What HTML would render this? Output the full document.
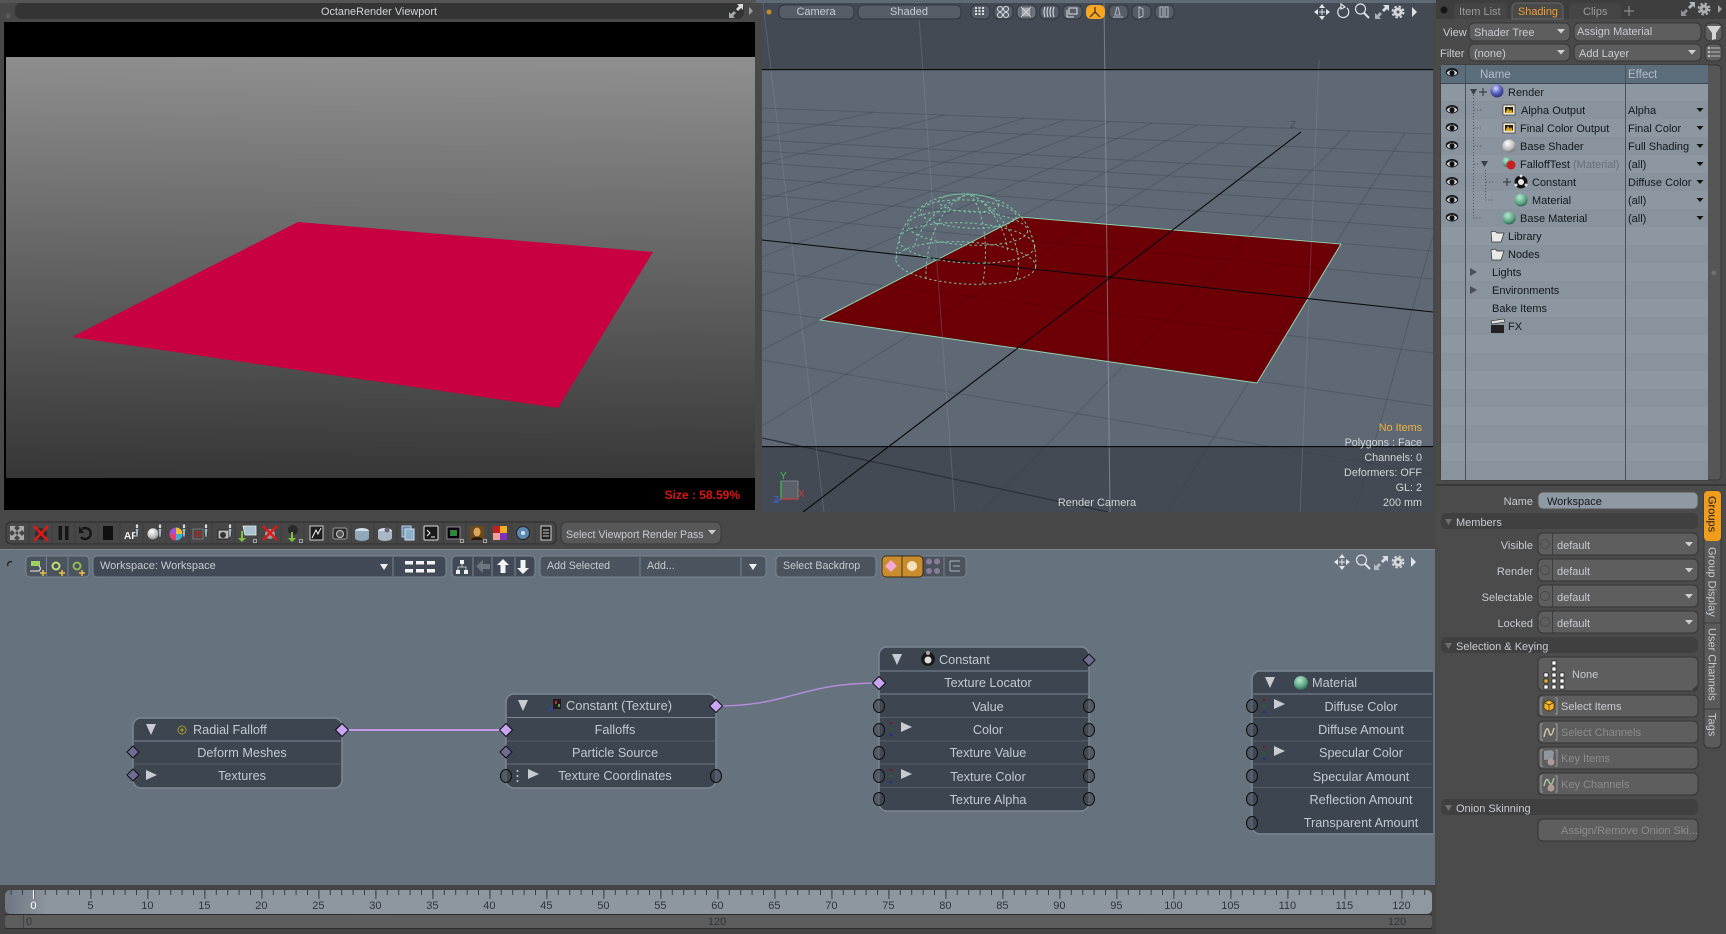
<!DOCTYPE html>
<html><head><meta charset="utf-8"><title>Modo</title>
<style>
html,body{margin:0;padding:0;background:#484848;overflow:hidden;width:1726px;height:934px}
svg{display:block;width:1726px;height:934px}
text{font-family:"Liberation Sans",sans-serif;font-size:11px;fill:#d2d4d6}
.m{text-anchor:middle}.e{text-anchor:end}
.n{font-size:12.7px;fill:#c3c9d0}
.d{fill:#14181c}
.l{fill:#c8ccd0}
.f{fill:#8c8c8c}
.o{font-size:10.9px}
.b{font-size:10.6px;fill:#c8ccd0}
.tl{font-size:11px;fill:#30353a}
</style></head><body>
<svg xmlns="http://www.w3.org/2000/svg" width="1726" height="934" viewBox="0 0 1726 934">
<defs>
<linearGradient id="og" x1="0.02" y1="0" x2="0" y2="1"><stop offset="0" stop-color="#8e8e8e"/><stop offset="1" stop-color="#363636"/></linearGradient>
<linearGradient id="rl" x1="0" y1="0" x2="1" y2="0"><stop offset="0" stop-color="#6e7782"/><stop offset=".03" stop-color="#8d959e"/><stop offset="1" stop-color="#8f979f"/></linearGradient>
<radialGradient id="sb" cx=".4" cy=".3" r=".8"><stop offset="0" stop-color="#d4d8ff"/><stop offset=".5" stop-color="#5860c0"/><stop offset="1" stop-color="#20245c"/></radialGradient>
<radialGradient id="sw" cx=".4" cy=".3" r=".8"><stop offset="0" stop-color="#fff"/><stop offset=".6" stop-color="#bbb"/><stop offset="1" stop-color="#555"/></radialGradient>
<radialGradient id="sg" cx=".4" cy=".3" r=".8"><stop offset="0" stop-color="#b8e8d0"/><stop offset=".6" stop-color="#5ca484"/><stop offset="1" stop-color="#1f4a38"/></radialGradient>
<clipPath id="vp"><rect x="762" y="3" width="671" height="509"/></clipPath>
<clipPath id="pl"><polygon points="1020,217 1341,244 1257,383 820,320"/></clipPath>
<clipPath id="sc"><rect x="0" y="549" width="1433" height="336"/></clipPath>
<pattern id="t1" x="33.4" y="890" width="11.4" height="20" patternUnits="userSpaceOnUse"><rect width="1" height="5" fill="#3a3f45"/></pattern>
<pattern id="t2" x="33.4" y="890" width="57" height="20" patternUnits="userSpaceOnUse"><rect width="1" height="9" fill="#3a3f45"/></pattern>
<g id="grid">
<line x1="762" y1="360" x2="1433" y2="474"/><line x1="762" y1="310" x2="1433" y2="406"/><line x1="762" y1="271" x2="1433" y2="353"/><line x1="762" y1="215" x2="1433" y2="279"/><line x1="762" y1="195" x2="1433" y2="251"/><line x1="762" y1="178" x2="1433" y2="229"/><line x1="762" y1="163" x2="1433" y2="209"/><line x1="762" y1="151" x2="1433" y2="192"/><line x1="762" y1="140" x2="1433" y2="177"/><line x1="762" y1="122" x2="1433" y2="153"/><line x1="762" y1="108" x2="1433" y2="134"/>
<line x1="1433" y1="236" x2="1355" y2="512"/><line x1="1405" y1="133" x2="1167" y2="512"/><line x1="1350" y1="131" x2="982" y2="512"/><line x1="1247" y1="127" x2="762" y2="426"/><line x1="1197" y1="125" x2="762" y2="350"/><line x1="1152" y1="123" x2="762" y2="296"/><line x1="1109" y1="122" x2="762" y2="257"/><line x1="1065" y1="120" x2="762" y2="226"/><line x1="1024" y1="118" x2="762" y2="200"/><line x1="945" y1="115" x2="762" y2="164"/><line x1="874" y1="112" x2="762" y2="138"/>
</g>
<g id="eye"><path d="M-6 0C-3-4.5 3-4.5 6 0C3 4 -3 4 -6 0Z" fill="#d8dce0" stroke="#111" stroke-width="1"/><circle r="2.6" fill="#111"/><path d="M-6-1.5C-3-5.5 3-5.5 6-1.5" fill="none" stroke="#111"/></g>
<path id="da" d="M-3.5-2H3.5L0 2Z" fill="#111"/>
<path id="dw" d="M-4-2H4L0 2.5Z" fill="#cfcfcf"/>
<g id="pc"><ellipse rx="5.5" ry="6.5" fill="#434b56" fill-opacity=".6" stroke="#0c0c0c" stroke-width="1"/></g>
<path id="pa" d="M0-6.5L6.5 0L0 6.5L-6.5 0Z" fill="#c8a4f4" stroke="#111" stroke-width="1"/>
<path id="pi" d="M0-6L6 0L0 6L-6 0Z" fill="#6f6c92" stroke="#111" stroke-width="1"/>
<path id="ar" d="M-5-5L6 0L-5 5Z" fill="#c8ccd0"/>
<g id="exp" fill="#d8dde2"><path d="M1-7H7V-1L5-3L2 0L0-2L3-5Z"/><path d="M-1 7H-7V1L-5 3L-2 0L0 2L-3 5Z" opacity=".7"/></g>
<g id="gear"><circle r="4.5" fill="#d4d8dc"/><circle r="5.5" fill="none" stroke="#d4d8dc" stroke-width="2" stroke-dasharray="2.4 2"/><circle r="1.5" fill="#555"/></g>
<g id="mv" fill="#e2e5e8"><path d="M0-8L3-4H-3ZM0 8L3 4H-3ZM-8 0L-4-3V3ZM8 0L4-3V3Z"/><rect x="-3" y="-.5" width="6" height="1"/><rect x="-.5" y="-3" width="1" height="6"/></g>
<g id="mg" fill="none" stroke="#dfe3e7"><circle cx="-1.5" cy="-2" r="5" stroke-width="1.2"/><line x1="2" y1="2" x2="7" y2="7" stroke-width="2"/></g>
<g id="rgb"><circle cy="-6" r="1.3" fill="#7a1a22"/><circle r="1.3" fill="#1d6a2c"/><circle cy="6" r="1.3" fill="#1d2d90"/></g>
<g id="dp"><rect x="-1.5" y="-7" width="3" height="4.500" rx="1" fill="#d8d8d8" stroke="#222" stroke-width=".5"/><path d="M-1.800-2.500h3.600l-.8 8l-1 1.500l-1-1.500z" fill="#9fb4c4" stroke="#222" stroke-width=".5"/></g>
<rect id="bd" x="-1.500" y="-1.500" width="3" height="3" fill="#444" stroke="#ccc" stroke-width=".7"/>
</defs>

<rect width="1726" height="934" fill="#484848"/>
<rect width="760" height="3" fill="#555"/>

<!-- Octane viewport -->
<circle cx="8" cy="16" r="2.5" fill="#5a5a5a"/>
<rect x="15" y="3" width="729" height="16" rx="6" fill="#343434"/>
<text x="379" y="15" class="m o">OctaneRender Viewport</text>
<use href="#exp" x="736" y="11"/>
<path d="M749 7L753 11L749 15Z" fill="#a0a0a0"/>
<rect x="4" y="22" width="751" height="488" fill="#000"/>
<rect x="6" y="57" width="749" height="421" fill="url(#og)"/>
<polygon points="298,222 653,252 558,408 72,337" fill="#c80041"/>
<text x="740" y="499" class="e" style="font-size:12px;font-weight:bold;fill:#dc1414">Size : 58.59%</text>

<!-- 3D viewport -->
<rect x="756" y="0" width="680" height="3" fill="#5f6a76"/>
<rect x="762" y="3" width="671" height="509" fill="#5e6975"/>
<rect x="762" y="3" width="671" height="66" fill="#434a54"/>
<rect x="762" y="446" width="671" height="66" fill="#434a54"/>
<g clip-path="url(#vp)">
 <use href="#grid" stroke="#39424d" stroke-opacity=".38" stroke-width="1" fill="none"/>
 <line x1="762" y1="438" x2="1108" y2="512" stroke="#2c3036" stroke-width="1.2"/>
 <polygon points="1020,217 1341,244 1257,383 820,320" fill="#6d0007"/>
 <g clip-path="url(#pl)"><use href="#grid" stroke="#5e0208" stroke-width="1" fill="none"/></g>
 <polygon points="1020,217 1341,244 1257,383 820,320" fill="none" stroke="#8fd4b0" stroke-width="1"/>
 <g stroke="#8a96a2" stroke-width="1" opacity=".3">
  <line x1="763" y1="3" x2="824" y2="512"/><line x1="918" y1="3" x2="955" y2="512"/><line x1="1319" y1="60" x2="1300" y2="512"/>
 </g>
 <line x1="1104" y1="3" x2="1110" y2="512" stroke="#98a3ae" stroke-width="1" opacity=".6"/>
 <line x1="762" y1="240" x2="1433" y2="312" stroke="#0a0a0a" stroke-width="1.1"/>
 <line x1="1301" y1="132" x2="803" y2="512" stroke="#0a0a0a" stroke-width="1.1"/>
 <text x="1290" y="128" style="fill:#444c56;font-size:10px">Z</text>
 <g fill="none" stroke="#7fd4aa" stroke-width="1" stroke-dasharray="2.500 2.500" opacity=".9">
  <g transform="rotate(3 967 240)">
  <ellipse cx="967" cy="263" rx="70" ry="21"/><ellipse cx="967" cy="243" rx="68" ry="20"/><ellipse cx="967" cy="228" rx="60" ry="17"/><ellipse cx="967" cy="214" rx="48" ry="14"/><ellipse cx="967" cy="203" rx="30" ry="9"/>
  <path d="M897 263C897 215 930 194 967 194C1004 194 1037 215 1037 263"/>
  <path d="M928 281C925 235 945 200 967 194M985 283C990 240 980 205 967 194M1018 277C1028 240 995 205 967 194M915 248C920 225 945 200 967 194M1008 248C1005 225 985 200 967 194"/>
  </g>
 </g>
</g>
<rect x="762" y="69" width="671" height="1.2" fill="#0c0c0c"/>
<rect x="762" y="446" width="671" height="1.2" fill="#0c0c0c"/>
<!-- viewport toolbar -->
<circle cx="769" cy="12" r="2.5" fill="#c88a2a"/>
<rect x="779" y="5" width="75" height="14" rx="5" fill="#565d67" stroke="#30353c"/>
<text x="816" y="15" class="m l">Camera</text>
<rect x="858" y="5" width="103" height="14" rx="5" fill="#565d67" stroke="#30353c"/>
<text x="909" y="15" class="m l">Shaded</text>
<g fill="#565d67" stroke="#30353c">
<rect x="971" y="5" width="19" height="14" rx="5"/><rect x="994" y="5" width="19" height="14" rx="5"/><rect x="1017" y="5" width="19" height="14" rx="5" fill="#6e747d"/><rect x="1040" y="5" width="19" height="14" rx="5"/><rect x="1063" y="5" width="19" height="14" rx="5"/><rect x="1109" y="5" width="19" height="14" rx="5"/><rect x="1132" y="5" width="19" height="14" rx="5"/><rect x="1155" y="5" width="19" height="14" rx="5"/>
</g>
<rect x="1086" y="5" width="19" height="14" rx="5" fill="#f6a623"/>
<path d="M1095 7V12L1090 17M1095 12L1100 17" fill="none" stroke="#3a2a10" stroke-width="1.2"/>
<g fill="none" stroke="#d8dce0" stroke-width="1.1">
<path d="M975 8h10M975 11h10M975 14h10" stroke-dasharray="2 1.500" stroke-width="2"/>
<circle cx="1000" cy="9" r="2.5"/><circle cx="1006" cy="9" r="2.5"/><circle cx="1000" cy="15" r="2.5"/><circle cx="1006" cy="15" r="2.5"/>
<rect x="1021" y="7" width="10" height="10" fill="#a4a9b0" stroke="#5a5f66"/>
<path d="M1021 7l10 10M1031 7l-10 10" stroke="#d8dce0" stroke-width=".8"/>
<path d="M1045 7q-2 5 0 10M1048 7q-2 5 0 10M1051 7q-2 5 0 10M1054 7q-2 5 0 10"/>
<path d="M1069 8h8v6h-8zM1067 10v7h7"/>
<path d="M1118 7l2 8h-5l2-8M1113 17h10" stroke="#aeb3b9"/>
<path d="M1139 7l4 2v7l-4 2z" stroke="#aeb3b9"/>
<path d="M1160 7h3v10h-3zM1165 7h3v10h-3z" stroke="#aeb3b9"/>
</g>
<use href="#mv" x="1322" y="12"/>
<path d="M1347 8A5.5 5.5 0 1 1 1341 7M1341 4V9L1345 7Z" fill="none" stroke="#dfe3e7" stroke-width="1.2"/>
<use href="#mg" x="1362" y="11"/>
<use href="#exp" x="1382" y="12"/>
<use href="#gear" x="1398" y="12"/>
<path d="M1412 7L1417 12L1412 17Z" fill="#e0e0e0"/>
<!-- overlay text -->
<g style="font-size:10.800px">
<text x="1422" y="431" class="e" style="fill:#f0b040;font-size:10.800px">No Items</text>
<text x="1422" y="446" class="e" style="font-size:10.800px">Polygons : Face</text>
<text x="1422" y="461" class="e" style="font-size:10.800px">Channels: 0</text>
<text x="1422" y="476" class="e" style="font-size:10.800px">Deformers: OFF</text>
<text x="1422" y="491" class="e" style="font-size:10.800px">GL: 2</text>
<text x="1422" y="506" class="e" style="font-size:10.800px">200 mm</text>
</g>
<text x="1097" y="506" class="m">Render Camera</text>
<rect x="781" y="481" width="17" height="18" fill="#5a5f68" stroke="#9aa0a8" stroke-width=".6"/>
<line x1="781" y1="481" x2="781" y2="499" stroke="#3fc04f" stroke-width="1.2"/>
<line x1="781" y1="499" x2="798" y2="499" stroke="#d03a3a" stroke-width="1.2"/>
<line x1="781" y1="499" x2="776" y2="502" stroke="#4060d0" stroke-width="1.2"/>
<text x="780" y="479" style="font-size:10px;fill:#3fc04f">Y</text>
<text x="798" y="497" style="font-size:10px;fill:#d03a3a">X</text>
<text x="773" y="503" style="font-size:10px;fill:#4060d0">Z</text>

<!-- Render toolbar -->
<rect x="6" y="522" width="550" height="22" rx="5" fill="#474747" stroke="#2c2c2c"/>
<g stroke="#3c3c3c"><path d="M29 523v20M52 523v20M75 523v20M98 523v20M120 523v20M143 523v20M166 523v20M189 523v20M212 523v20M235 523v20M258 523v20M281 523v20M304 523v20M328 523v20M351 523v20M374 523v20M397 523v20M420 523v20M443 523v20M466 523v20M489 523v20M512 523v20M535 523v20"/></g>
<g>
<g fill="#a8a8a8"><path d="M10 526l6 0-2 2 3 3-2 2-3-3-2 2zM24 526l-6 0 2 2-3 3 2 2 3-3 2 2zM10 540l6 0-2-2 3-3-2-2-3 3-2-2zM24 540l-6 0 2-2-3-3 2-2 3 3 2-2z"/></g>
<circle cx="41" cy="534" r="6" fill="#2e2e2e"/><path d="M34 526L48 541M48 526L34 541" stroke="#e01818" stroke-width="2.400"/>
<rect x="58.500" y="526" width="3.500" height="14" fill="#151515"/><rect x="65" y="526" width="3.500" height="14" fill="#151515"/>
<path d="M82 529A5.500 5.500 0 1 1 81 537" fill="none" stroke="#151515" stroke-width="2.400"/><path d="M79 526v7h5z" fill="#151515"/>
<rect x="103" y="526" width="10" height="14" fill="#101010"/>
<text x="124" y="539" style="font-size:10px;fill:#f0f0f0;font-weight:bold">AF</text><use href="#dp" x="137" y="531"/>
<circle cx="153" cy="534" r="6" fill="url(#sw)" stroke="#333" stroke-width=".6"/><use href="#dp" x="160" y="531"/>
<circle cx="176" cy="534" r="6.500" fill="#a050d0"/><path d="M176 534L176 527.500A6.500 6.500 0 0 1 182.500 534Z" fill="#e8c030"/><path d="M176 534L182.500 534A6.500 6.500 0 0 1 176 540.500Z" fill="#40b0d0"/><path d="M176 534L169.500 534A6.500 6.500 0 0 0 176 540.500Z" fill="#e04070"/><use href="#dp" x="184" y="531"/>
<rect x="193" y="529" width="10" height="10" fill="none" stroke="#777"/><rect x="196" y="532" width="4" height="4" fill="none" stroke="#d01818"/><use href="#dp" x="206" y="531"/>
<rect x="218" y="530" width="11" height="9" fill="#bbb" stroke="#222"/><circle cx="223" cy="535" r="3" fill="#333"/><use href="#dp" x="230" y="531"/>
<path d="M243 526h13v9h-11z" fill="#a8c0d0" stroke="#eee" stroke-width=".8"/><path d="M241 531v7h-3l4 4 4-4h-3v-7z" fill="#80c040"/><use href="#bd" x="255" y="541"/>
<circle cx="270" cy="534" r="5" fill="#999"/><path d="M263 526L277 540M277 526L263 540" stroke="#e01818" stroke-width="2.400"/>
<circle cx="293" cy="530" r="5" fill="#2a2a2a"/><path d="M291 532v6h-3l4 4 4-4h-3v-6z" fill="#80c040"/><use href="#bd" x="301" y="541"/>
<rect x="310" y="526" width="13" height="14" fill="#1c1c1c" stroke="#ccc"/><path d="M312 538l4-8 2 4 3-6" stroke="#eee" fill="none"/>
<rect x="333" y="528" width="14" height="11" rx="2" fill="#2c2c2c" stroke="#999"/><circle cx="340" cy="534" r="3.500" fill="#555" stroke="#ccc"/>
<ellipse cx="362" cy="531" rx="7" ry="3" fill="#cfe0ea"/><path d="M355 531v7a7 3 0 0 0 14 0v-7" fill="#90a8b8"/>
<ellipse cx="385" cy="531" rx="7" ry="3" fill="#dde"/><path d="M378 531v7a7 3 0 0 0 14 0v-7" fill="#a8b8c4"/><circle cx="387" cy="530" r="2.500" fill="#667"/>
<rect x="402" y="526" width="9" height="11" fill="#6a8aa8" stroke="#bcd"/><rect x="405" y="529" width="9" height="11" fill="#8ab0cc" stroke="#cde"/>
<rect x="424" y="526" width="14" height="14" rx="1" fill="#1a1a1a" stroke="#ddd"/><path d="M427 530l3 3-3 3M431 537h4" stroke="#eee" fill="none"/>
<rect x="447" y="527" width="13" height="12" fill="#101" stroke="#888"/><rect x="450" y="530" width="7" height="6" fill="#2a8a3a"/><use href="#bd" x="462" y="541"/>
<rect x="470" y="526" width="14" height="14" fill="#6a4a1c"/><ellipse cx="477" cy="532" rx="3.500" ry="4.500" fill="#d8a860"/><path d="M471 540c1-4 11-4 12 0z" fill="#2a1a10"/><use href="#bd" x="485" y="541"/>
<rect x="493" y="526" width="14" height="14" fill="#c02020"/><rect x="500" y="533" width="7" height="7" fill="#8030c0"/><rect x="493" y="533" width="7" height="7" fill="#f0a0a0"/><rect x="500" y="526" width="7" height="7" fill="#f0b020"/>
<circle cx="523" cy="533" r="6.500" fill="#5a8ab0" stroke="#222"/><circle cx="523" cy="533" r="2" fill="#dde"/>
<rect x="541" y="526" width="10" height="14" fill="#222" stroke="#ccc"/><path d="M543 530h6M543 533h6M543 536h6" stroke="#ccc"/>
</g>
<rect x="561" y="522" width="160" height="22" rx="6" fill="#585858" stroke="#383838"/>
<text x="566" y="538" class="b">Select Viewport Render Pass</text>
<use href="#dw" x="712" y="532"/>

<!-- Schematic -->
<rect x="0" y="549" width="1435" height="336" fill="#66727e"/>
<rect x="0" y="549" width="1435" height="1" fill="#7b8692"/>
<path d="M8 566A3 3 0 0 1 12 562" fill="none" stroke="#1c1c1c" stroke-width="1.200"/>
<g fill="#4a535e" stroke="#7b8692">
<rect x="26" y="556" width="63" height="21" rx="4"/>
<rect x="93" y="556" width="353" height="21" rx="4" fill="#404955"/>
<rect x="452" y="556" width="83" height="21" rx="4" fill="#404955"/>
<rect x="540" y="556" width="226" height="21" rx="4"/>
<rect x="776" y="556" width="100" height="21" rx="4"/>
<rect x="881" y="556" width="85" height="21" rx="4"/>
</g>
<rect x="882" y="556" width="41" height="21" rx="4" fill="#c98c2f" stroke="#3a2c10"/>
<g stroke="#7b8692"><path d="M46.500 557v19M68 557v19M393 557v19M473 557v19M492 557v19M515 557v19M640 557v19M741 557v19M944 557v19"/></g>
<line x1="902" y1="556" x2="902" y2="577" stroke="#4a3a14"/>
<rect x="31" y="561" width="9" height="5" fill="#9fd060"/><path d="M30 571h9a3 3 0 0 0 0-5" fill="none" stroke="#eee"/><path d="M43 570v6M40 573h6" stroke="#f0c040" stroke-width="1.500"/>
<circle cx="56" cy="566" r="3.500" fill="none" stroke="#bfe070" stroke-width="2"/><path d="M62 570v6M59 573h6" stroke="#f0c040" stroke-width="1.500"/>
<circle cx="77" cy="566" r="3.500" fill="none" stroke="#90b858" stroke-width="2"/><path d="M82 570v6M79 573h6" stroke="#f0c040" stroke-width="1.500"/>
<text x="100" y="569" class="l" style="font-size:11px">Workspace: Workspace</text>
<path d="M380 564h8l-4 6z" fill="#eee"/>
<g fill="#f4f4f4"><rect x="405" y="561" width="8" height="3.500"/><rect x="416" y="561" width="8" height="3.500"/><rect x="427" y="561" width="8" height="3.500"/><rect x="405" y="569" width="8" height="3.500"/><rect x="416" y="569" width="8" height="3.500"/><rect x="427" y="569" width="8" height="3.500"/></g>
<g fill="#f0f0f0"><rect x="460" y="560" width="4" height="4"/><rect x="456" y="570" width="4" height="4"/><rect x="464" y="570" width="4" height="4"/></g>
<path d="M462 564v3M458 570v-3h8v3" fill="none" stroke="#ddd" stroke-width=".8"/>
<path d="M476 566l7-6v4h7v5h-7v4z" fill="#6d757f"/>
<path d="M503 559l6 6h-3.500v8h-5v-8h-3.500z" fill="#f4f4f4"/>
<path d="M523 574l6-6h-3.500v-8h-5v8h-3.500z" fill="#f4f4f4"/>
<text x="547" y="569" class="b">Add Selected</text>
<text x="647" y="569" class="b">Add...</text>
<path d="M749 564h8l-4 6z" fill="#eee"/>
<text x="783" y="569" class="b">Select Backdrop</text>
<path d="M891 560l6 6-6 6-6-6z" fill="#f2a8d0"/>
<circle cx="912" cy="566" r="5" fill="#f4e2c0"/>
<g fill="#8a7c98"><circle cx="929" cy="561.500" r="3"/><circle cx="937" cy="561.500" r="3"/><circle cx="929" cy="571" r="3"/><circle cx="937" cy="571" r="3"/></g>
<path d="M950 561h10M953 566h7M950 571h10M950 561v10" stroke="#9aa0a6" fill="none" stroke-width="1.200"/>
<use href="#mv" x="1342" y="562"/><use href="#mg" x="1363" y="562"/><use href="#exp" x="1381" y="563"/><use href="#gear" x="1398" y="562"/>
<path d="M1411 557L1416 562L1411 567Z" fill="#dfe3e7"/>

<!-- connections -->
<line x1="342" y1="730" x2="506" y2="730" stroke="#c09ae6" stroke-width="2"/>
<path d="M716 706C790 706 800 683 879 683" fill="none" stroke="#b48edc" stroke-width="1.400"/>

<!-- Node: Radial Falloff -->
<g clip-path="url(#sc)">
<rect x="133" y="718" width="209" height="70" rx="8" fill="#3d4551" stroke="#7d8895" stroke-width="1.500"/>
<line x1="134" y1="741" x2="341" y2="741" stroke="#7d8895"/><line x1="134" y1="764" x2="341" y2="764" stroke="#565f6b"/>
<path d="M146 724h10l-5 11z" fill="#c8ccd0"/>
<circle cx="182" cy="730" r="4" fill="none" stroke="#a09a30"/><circle cx="182" cy="730" r="1.500" fill="#a09a30"/>
<text x="193" y="734" class="n">Radial Falloff</text>
<text x="242" y="757" class="n m">Deform Meshes</text>
<use href="#ar" x="151" y="775"/>
<text x="242" y="780" class="n m">Textures</text>
<use href="#pa" x="342" y="730"/><use href="#pi" x="133" y="752"/><use href="#pi" x="133" y="775"/>

<!-- Node: Constant (Texture) -->
<rect x="506" y="694" width="210" height="94" rx="8" fill="#3d4551" stroke="#7d8895" stroke-width="1.500"/>
<line x1="507" y1="717.500" x2="715" y2="717.500" stroke="#7d8895"/><line x1="507" y1="741" x2="715" y2="741" stroke="#565f6b"/><line x1="507" y1="764" x2="715" y2="764" stroke="#6a7480"/>
<path d="M518 700h10l-5 11z" fill="#c8ccd0"/>
<path d="M549 711l4-5" stroke="#2a48b0" stroke-width="2"/><rect x="553" y="699" width="8" height="10" fill="#241c1c"/><rect x="555" y="701" width="2" height="3" fill="#b83030"/><rect x="558" y="704" width="2" height="3" fill="#50a050"/>
<text x="566" y="710" class="n" style="font-size:12.900px">Constant (Texture)</text>
<text x="615" y="734" class="n m">Falloffs</text>
<text x="615" y="757" class="n m">Particle Source</text>
<circle cx="517.500" cy="771" r="1" fill="#ccc"/><circle cx="517.500" cy="776" r="1" fill="#ccc"/><circle cx="517.500" cy="781" r="1" fill="#ccc"/>
<use href="#ar" x="533" y="774"/>
<text x="615" y="780" class="n m">Texture Coordinates</text>
<use href="#pa" x="506" y="730"/><use href="#pi" x="506" y="752"/><use href="#pc" x="506" y="776"/><use href="#pc" x="716" y="776"/><use href="#pa" x="716" y="706"/>

<!-- Node: Constant -->
<rect x="879" y="647" width="210" height="164" rx="8" fill="#3d4551" stroke="#7d8895" stroke-width="1.500"/>
<line x1="880" y1="671" x2="1088" y2="671" stroke="#7d8895"/><line x1="880" y1="694" x2="1088" y2="694" stroke="#7d8895"/><line x1="880" y1="717.500" x2="1088" y2="717.500" stroke="#565f6b"/><line x1="880" y1="741" x2="1088" y2="741" stroke="#565f6b"/><line x1="880" y1="764" x2="1088" y2="764" stroke="#565f6b"/><line x1="880" y1="787.500" x2="1088" y2="787.500" stroke="#565f6b"/>
<path d="M892 654h10l-5 11z" fill="#c8ccd0"/>
<circle cx="928" cy="659" r="7" fill="#181818"/><circle cx="928" cy="660" r="3.500" fill="#ddd"/><circle cx="928" cy="653" r="2" fill="#aaa"/>
<text x="939" y="664" class="n">Constant</text>
<text x="988" y="687" class="n m">Texture Locator</text>
<text x="988" y="711" class="n m">Value</text>
<text x="988" y="734" class="n m">Color</text>
<text x="988" y="757" class="n m">Texture Value</text>
<text x="988" y="781" class="n m">Texture Color</text>
<text x="988" y="804" class="n m">Texture Alpha</text>
<use href="#rgb" x="891" y="729"/><use href="#ar" x="906" y="727"/><use href="#rgb" x="891" y="776"/><use href="#ar" x="906" y="774"/>
<use href="#pi" x="1089" y="660"/><use href="#pa" x="879" y="683"/>
<use href="#pc" x="879" y="706"/><use href="#pc" x="879" y="730"/><use href="#pc" x="879" y="753"/><use href="#pc" x="879" y="776"/><use href="#pc" x="879" y="799"/>
<use href="#pc" x="1089" y="706"/><use href="#pc" x="1089" y="730"/><use href="#pc" x="1089" y="753"/><use href="#pc" x="1089" y="776"/><use href="#pc" x="1089" y="799"/>

<!-- Node: Material -->
<rect x="1252" y="671" width="240" height="163" rx="8" fill="#3d4551" stroke="#7d8895" stroke-width="1.500"/>
<line x1="1253" y1="694" x2="1432" y2="694" stroke="#7d8895"/><line x1="1253" y1="717.500" x2="1432" y2="717.500" stroke="#565f6b"/><line x1="1253" y1="741" x2="1432" y2="741" stroke="#565f6b"/><line x1="1253" y1="764" x2="1432" y2="764" stroke="#565f6b"/><line x1="1253" y1="787.500" x2="1432" y2="787.500" stroke="#565f6b"/>
<path d="M1265 677h10l-5 11z" fill="#c8ccd0"/>
<circle cx="1301" cy="683" r="7" fill="url(#sg)"/>
<text x="1312" y="687" class="n">Material</text>
<text x="1361" y="711" class="n m">Diffuse Color</text>
<text x="1361" y="734" class="n m">Diffuse Amount</text>
<text x="1361" y="757" class="n m">Specular Color</text>
<text x="1361" y="781" class="n m">Specular Amount</text>
<text x="1361" y="804" class="n m">Reflection Amount</text>
<text x="1361" y="827" class="n m">Transparent Amount</text>
<use href="#rgb" x="1264" y="706"/><use href="#ar" x="1279" y="704"/><use href="#rgb" x="1264" y="753"/><use href="#ar" x="1279" y="751"/>
<use href="#pc" x="1252" y="706"/><use href="#pc" x="1252" y="730"/><use href="#pc" x="1252" y="753"/><use href="#pc" x="1252" y="776"/><use href="#pc" x="1252" y="799"/><use href="#pc" x="1252" y="823"/>
</g>

<!-- Timeline -->
<rect x="0" y="885" width="1436" height="49" fill="#444"/>
<rect x="5" y="890" width="1427" height="24" rx="5" fill="url(#rl)"/>
<rect x="5" y="890" width="1427" height="20" fill="url(#t1)"/>
<rect x="5" y="890" width="1427" height="20" fill="url(#t2)"/>
<rect x="33" y="890" width="1" height="9" fill="#fff"/>
<rect x="5" y="915" width="1427" height="13" rx="3" fill="#5d5d5d"/>
<rect x="5" y="914" width="1427" height="1" fill="#2c2c2c"/>
<rect x="5" y="928" width="1427" height="1" fill="#2c2c2c"/>
<rect x="23" y="915" width="1" height="13" fill="#444"/>
<text x="33.400" y="909" class="m tl" style="fill:#fff">0</text>
<g class="tl">
<text x="90.400" y="909" class="m tl">5</text><text x="147.400" y="909" class="m tl">10</text><text x="204.400" y="909" class="m tl">15</text><text x="261.400" y="909" class="m tl">20</text><text x="318.400" y="909" class="m tl">25</text><text x="375.400" y="909" class="m tl">30</text><text x="432.400" y="909" class="m tl">35</text><text x="489.400" y="909" class="m tl">40</text><text x="546.400" y="909" class="m tl">45</text><text x="603.400" y="909" class="m tl">50</text><text x="660.400" y="909" class="m tl">55</text><text x="717.400" y="909" class="m tl">60</text><text x="774.400" y="909" class="m tl">65</text><text x="831.400" y="909" class="m tl">70</text><text x="888.400" y="909" class="m tl">75</text><text x="945.400" y="909" class="m tl">80</text><text x="1002.400" y="909" class="m tl">85</text><text x="1059.400" y="909" class="m tl">90</text><text x="1116.400" y="909" class="m tl">95</text><text x="1173.400" y="909" class="m tl">100</text><text x="1230.400" y="909" class="m tl">105</text><text x="1287.400" y="909" class="m tl">110</text><text x="1344.400" y="909" class="m tl">115</text><text x="1401.400" y="909" class="m tl">120</text>
<text x="26" y="925" class="tl">0</text><text x="717" y="925" class="m tl">120</text><text x="1397" y="925" class="m tl">120</text>
</g>

<!-- Right panel -->
<rect x="1436" y="0" width="290" height="934" fill="#4a4a4a"/>
<rect x="1436" y="0" width="290" height="19" fill="#3e3e3e"/>
<circle cx="1444" cy="10" r="3.500" fill="#161616"/>
<path d="M1454 19V8a5 5 0 0 1 5-5H1502a5 5 0 0 1 5 5V19Z" fill="#454545"/>
<path d="M1569 19V8a5 5 0 0 1 5-5H1616a5 5 0 0 1 5 5V19Z" fill="#454545"/>
<path d="M1512 19V8a5 5 0 0 1 5-5H1558a5 5 0 0 1 5 5V19Z" fill="#4a4a4a" stroke="#656565"/>
<text x="1459" y="15" style="font-size:11px;fill:#9a9a9a">Item List</text>
<text x="1518" y="15" style="font-size:10.900px;fill:#f0a030">Shading</text>
<text x="1583" y="15" style="font-size:11px;fill:#9a9a9a">Clips</text>
<path d="M1629 6v10M1624 11h10" stroke="#9a9a9a" stroke-width="1"/>
<use href="#exp" x="1688" y="9" opacity=".75"/><use href="#gear" x="1704" y="9" opacity=".75"/>
<path d="M1718 5L1722 9L1718 13Z" fill="#a0a0a0"/>
<text x="1443" y="36" class="l">View</text>
<text x="1440" y="57" class="l">Filter</text>
<g fill="#5e5e5e" stroke="#353535">
<rect x="1469" y="23" width="101" height="18" rx="5"/><rect x="1574" y="23" width="127" height="18" rx="5"/>
<rect x="1705" y="23" width="17" height="18" rx="5"/>
<rect x="1469" y="44" width="101" height="17" rx="5"/><rect x="1574" y="44" width="127" height="17" rx="5"/>
<rect x="1705" y="44" width="17" height="17" rx="5"/>
</g>
<text x="1474" y="36" class="l">Shader Tree</text><use href="#dw" x="1561" y="31"/>
<text x="1577" y="35" class="l">Assign Material</text>
<path d="M1707 26h14l-5 7v6l-4 1v-7z" fill="#d4d4d4"/>
<text x="1474" y="57" class="l">(none)</text><use href="#dw" x="1561" y="52"/>
<text x="1579" y="57" class="l">Add Layer</text><use href="#dw" x="1692" y="52"/>
<path d="M1711 48h9M1711 52h9M1711 56h9" stroke="#bbb"/><circle cx="1709" cy="48" r="1.300" fill="#bbb"/><circle cx="1709" cy="52" r="1.300" fill="#bbb"/><circle cx="1709" cy="56" r="1.300" fill="#bbb"/>
<!-- tree -->
<rect x="1441" y="65" width="280" height="415" rx="4" fill="#565656" stroke="#353535"/>
<rect x="1441" y="83" width="267" height="397" fill="#88939e"/>
<rect x="1441" y="65" width="267" height="18" fill="#5c6d7c"/>
<g fill="#8c97a2"><rect x="1441" y="83" width="267" height="18"/><rect x="1441" y="119" width="267" height="18"/><rect x="1441" y="155" width="267" height="18"/><rect x="1441" y="191" width="267" height="18"/><rect x="1441" y="227" width="267" height="18"/><rect x="1441" y="263" width="267" height="18"/><rect x="1441" y="299" width="267" height="18"/><rect x="1441" y="335" width="267" height="18"/><rect x="1441" y="371" width="267" height="18"/><rect x="1441" y="407" width="267" height="18"/><rect x="1441" y="443" width="267" height="18"/></g>
<path d="M1465.500 65V480M1625.500 65V480" stroke="#48525c"/>
<path d="M1441 83.500H1708" stroke="#3c4650"/>
<circle cx="1714" cy="273" r="2.500" fill="#6e6e6e"/>
<text x="1480" y="78" style="fill:#b4bec8;font-size:11.500px">Name</text>
<text x="1628" y="78" style="fill:#b4bec8;font-size:11.500px">Effect</text>
<use href="#eye" x="1452" y="73"/><use href="#eye" x="1452" y="110"/><use href="#eye" x="1452" y="128"/><use href="#eye" x="1452" y="146"/><use href="#eye" x="1452" y="164"/><use href="#eye" x="1452" y="182"/><use href="#eye" x="1452" y="200"/><use href="#eye" x="1452" y="218"/>
<path d="M1470 89h7l-3.500 6z" fill="#3a4048"/>
<path d="M1483 88v8M1479 92h8M1507 178v8M1503 182h8" stroke="#2a3036" stroke-width="1"/>
<g fill="none" stroke="#4f565e" stroke-dasharray="1 2"><path d="M1473.500 95V218H1482M1474 110H1482M1474 128H1482M1474 146H1482M1474 164H1480M1485.500 170V200H1494M1486 182H1494"/></g>
<circle cx="1497" cy="91" r="6.500" fill="url(#sb)"/>
<g fill="#eee8d0" stroke="#222" stroke-width=".6"><rect x="1503" y="105" width="12" height="10"/><rect x="1503" y="123" width="12" height="10"/></g>
<rect x="1505" y="107" width="8" height="6" fill="#201c10"/><rect x="1505" y="125" width="8" height="6" fill="#201c10"/>
<path d="M1505 113l3-5 2 3 1-2 2 4zM1505 131l3-5 2 3 1-2 2 4z" fill="#e0a820"/>
<circle cx="1509" cy="146" r="6.500" fill="url(#sw)"/>
<circle cx="1507" cy="162" r="5" fill="url(#sg)"/><circle cx="1511" cy="165" r="4.500" fill="#c82020"/>
<path d="M1481 161h7l-3.500 6z" fill="#3a4048"/>
<circle cx="1521" cy="182" r="6.500" fill="#111"/><circle cx="1521" cy="182" r="3" fill="#e8e8e8"/><circle cx="1521" cy="176" r="1.500" fill="#ddd"/><circle cx="1516" cy="185" r="1.500" fill="#ddd"/><circle cx="1526" cy="185" r="1.500" fill="#ddd"/>
<circle cx="1521" cy="200" r="6.500" fill="url(#sg)"/>
<circle cx="1509" cy="218" r="6.500" fill="url(#sg)"/>
<path d="M1491 232l4-1 2 2h7l-3 9h-9z M1491 250l4-1 2 2h7l-3 9h-9z" fill="#e8e8e4" stroke="#333" stroke-width=".7"/>
<path d="M1470 268l7 4-7 4zM1470 286l7 4-7 4z" fill="#4a4f56"/>
<rect x="1491" y="325" width="13" height="8" fill="#222"/><path d="M1491 321l13-2 1 3-13 2z" fill="#ddd" stroke="#222" stroke-width=".6"/>
<g class="d">
<text x="1508" y="96" class="d">Render</text>
<text x="1521" y="114" class="d">Alpha Output</text>
<text x="1520" y="132" class="d">Final Color Output</text>
<text x="1520" y="150" class="d">Base Shader</text>
<text x="1520" y="168" class="d">FalloffTest <tspan style="fill:#66707a">(Material)</tspan></text>
<text x="1532" y="186" class="d">Constant</text>
<text x="1532" y="204" class="d">Material</text>
<text x="1520" y="222" class="d">Base Material</text>
<text x="1508" y="240" class="d">Library</text>
<text x="1508" y="258" class="d">Nodes</text>
<text x="1492" y="276" class="d">Lights</text>
<text x="1492" y="294" class="d">Environments</text>
<text x="1492" y="312" class="d">Bake Items</text>
<text x="1508" y="330" class="d">FX</text>
<text x="1628" y="114" class="d">Alpha</text>
<text x="1628" y="132" class="d">Final Color</text>
<text x="1628" y="150" class="d">Full Shading</text>
<text x="1628" y="168" class="d">(all)</text>
<text x="1628" y="186" class="d">Diffuse Color</text>
<text x="1628" y="204" class="d">(all)</text>
<text x="1628" y="222" class="d">(all)</text>
</g>
<use href="#da" x="1700" y="110"/><use href="#da" x="1700" y="128"/><use href="#da" x="1700" y="146"/><use href="#da" x="1700" y="164"/><use href="#da" x="1700" y="182"/><use href="#da" x="1700" y="200"/><use href="#da" x="1700" y="218"/>

<!-- properties -->
<rect x="1436" y="484" width="290" height="450" fill="#4b4b4b"/>
<rect x="1436" y="484" width="290" height="2" fill="#383838"/>
<text x="1533" y="505" class="e l">Name</text>
<rect x="1538" y="492" width="160" height="17" rx="5" fill="#8e99a4" stroke="#555"/>
<text x="1547" y="505" class="d">Workspace</text>
<g fill="#404040">
<rect x="1441" y="513" width="257" height="16" rx="5"/><rect x="1441" y="637" width="257" height="16" rx="5"/><rect x="1441" y="799" width="257" height="16" rx="5"/>
</g>
<path d="M1445 519h7l-3.500 6zM1445 643h7l-3.500 6zM1445 805h7l-3.500 6z" fill="#6e6e6e"/>
<text x="1456" y="526" class="l">Members</text>
<text x="1456" y="650" class="l">Selection &amp; Keying</text>
<text x="1456" y="812" class="l">Onion Skinning</text>
<text x="1533" y="549" class="e l">Visible</text>
<text x="1533" y="575" class="e l">Render</text>
<text x="1533" y="601" class="e l">Selectable</text>
<text x="1533" y="627" class="e l">Locked</text>
<g fill="#5e5e5e" stroke="#353535">
<rect x="1538" y="533" width="160" height="22" rx="5"/><rect x="1538" y="559" width="160" height="22" rx="5"/><rect x="1538" y="585" width="160" height="22" rx="5"/><rect x="1538" y="611" width="160" height="22" rx="5"/>
<rect x="1538" y="657" width="160" height="34" rx="5"/><rect x="1538" y="695" width="160" height="22" rx="5"/><rect x="1538" y="721" width="160" height="22" rx="5"/><rect x="1538" y="747" width="160" height="22" rx="5"/><rect x="1538" y="773" width="160" height="22" rx="5"/><rect x="1538" y="819" width="160" height="22" rx="5"/>
</g>
<path d="M1552.500 533v22M1552.500 559v22M1552.500 585v22M1552.500 611v22" stroke="#3e3e3e"/>
<g fill="none" stroke="#4a4a4a"><circle cx="1545" cy="544" r="4.500"/><circle cx="1545" cy="570" r="4.500"/><circle cx="1545" cy="596" r="4.500"/><circle cx="1545" cy="622" r="4.500"/></g>
<text x="1557" y="549" class="l">default</text><text x="1557" y="575" class="l">default</text><text x="1557" y="601" class="l">default</text><text x="1557" y="627" class="l">default</text>
<use href="#dw" x="1689" y="544"/><use href="#dw" x="1689" y="570"/><use href="#dw" x="1689" y="596"/><use href="#dw" x="1689" y="622"/>
<g fill="#fff" stroke="#111" stroke-width=".6">
<rect x="1552" y="661" width="4" height="4"/><rect x="1552" y="667" width="4" height="4"/>
<rect x="1544" y="673" width="4" height="4"/><rect x="1552" y="673" width="4" height="4"/><rect x="1560" y="673" width="4" height="4"/>
<rect x="1544" y="679" width="4" height="4" fill="#f0b030"/><rect x="1552" y="679" width="4" height="4"/><rect x="1560" y="679" width="4" height="4"/>
<rect x="1544" y="685" width="4" height="4"/><rect x="1552" y="685" width="4" height="4"/><rect x="1560" y="685" width="4" height="4"/>
</g>
<text x="1572" y="678" class="l">None</text>
<path d="M1692 690l5-5v5z" fill="#3a3a3a"/>
<path d="M1543 698h-2v16h2M1555 698h2v16h-2M1543 724h-2v16h2M1555 724h2v16h-2M1543 750h-2v16h2M1555 750h2v16h-2M1543 776h-2v16h2M1555 776h2v16h-2" fill="none" stroke="#999"/>
<path d="M1549 700l5 2.500v6l-5 3-5-3v-6z" fill="#f4b428" stroke="#3c2c08" stroke-width=".7"/><path d="M1549 705v6M1544 702.500l5 2.500 5-2.500" fill="none" stroke="#3c2c08" stroke-width=".7"/>
<path d="M1544 737c2-10 4-10 5-5s3 4 5-4" fill="none" stroke="#c8c4a8" stroke-width="1.500"/>
<path d="M1544 751l7-1 3 2-1 7-9 1z" fill="#90979e"/><circle cx="1551" cy="762" r="3.500" fill="#b09a98"/>
<path d="M1544 786c2-8 3-8 5-4s3 3 5-4" fill="none" stroke="#a8c0a0" stroke-width="1.500"/><circle cx="1551" cy="788" r="3.500" fill="#b09a98"/>
<text x="1561" y="710" class="l">Select Items</text>
<text x="1561" y="736" class="f">Select Channels</text>
<text x="1561" y="762" class="f">Key Items</text>
<text x="1561" y="788" class="f">Key Channels</text>
<text x="1561" y="834" class="f">Assign/Remove Onion Ski...</text>
<!-- vertical tabs -->
<rect x="1704" y="491" width="17" height="257" rx="5" fill="#5a5a5a" stroke="#353535"/>
<rect x="1704" y="491" width="17" height="50" rx="4" fill="#f29c1c"/>
<path d="M1704 623h17M1704 709h17" stroke="#3c3c3c"/>
<text transform="translate(1708.500,496) rotate(90)" class="d">Groups</text>
<text transform="translate(1708.500,547) rotate(90)" class="l">Group Display</text>
<text transform="translate(1708.500,628) rotate(90)" class="l">User Channels</text>
<text transform="translate(1708.500,713) rotate(90)" class="l">Tags</text>
</svg>
</body></html>
